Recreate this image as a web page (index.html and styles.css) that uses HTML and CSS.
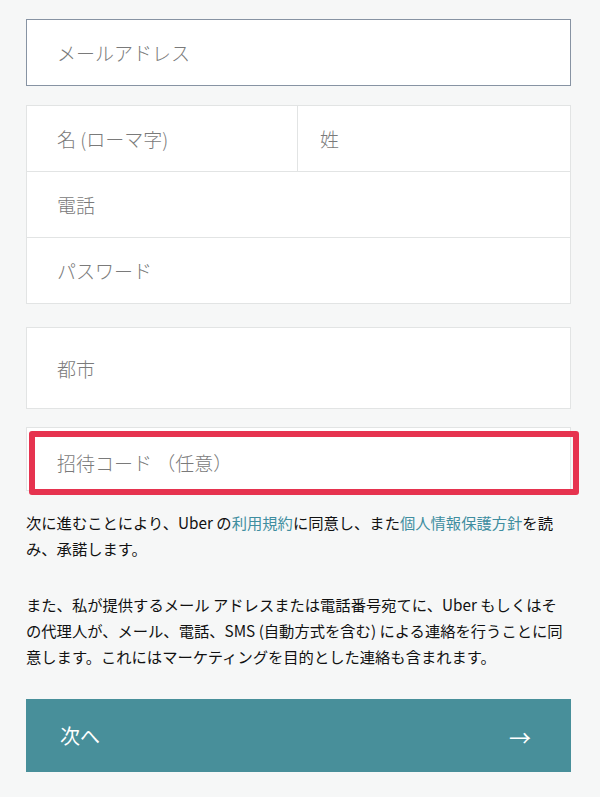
FILE: index.html
```html
<!DOCTYPE html>
<html lang="ja">
<head>
  <meta charset="UTF-8" />
  <meta name="viewport" content="width=device-width, initial-scale=1.0" />
  <title>Uber 登録</title>
  <link rel="stylesheet" href="styles.css">
</head>
<body>
  <form class="signup">
    <div class="field field-focus">
      <input type="email" placeholder="メールアドレス" />
    </div>

    <div class="group">
      <div class="group-row">
        <input type="text" placeholder="名 (ローマ字)" />
        <input type="text" class="divided" placeholder="姓" />
      </div>
      <div class="group-row">
        <input type="tel" placeholder="電話" />
      </div>
      <div class="group-row">
        <input type="password" placeholder="パスワード" />
      </div>
    </div>

    <div class="field field-city">
      <input type="text" placeholder="都市" />
    </div>

    <div class="field field-invite">
      <input type="text" placeholder="招待コード （任意）" />
      <span class="highlight"></span>
    </div>

    <p class="note">次に進むことにより、Uber の<a href="#">利用規約</a>に同意し、また<a href="#">個人情報保護方針</a>を読み、承諾します。</p>

    <p class="note">また、私が提供するメール アドレスまたは電話番号宛てに、Uber もしくはその代理人が、メール、電話、SMS (自動方式を含む) による連絡を行うことに同意します。これにはマーケティングを目的とした連絡も含まれます。</p>

    <button type="button" class="next">
      <span>次へ</span>
      <span class="arrow">→</span>
    </button>
  </form>
</body>
</html>
```

FILE: styles.css
```css
body {
  margin: 0;
  background: #f6f7f7;
  font-family: "Noto Sans CJK JP", "Noto Sans", sans-serif;
  color: #222;
}

.signup {
  width: 545px;
  padding: 19px 29px 0 26px;
}

input {
  display: block;
  width: 100%;
  box-sizing: border-box;
  border: none;
  outline: none;
  background: transparent;
  padding: 0 0 0 30px;
  font-family: inherit;
  font-size: 19px;
  font-weight: 300;
  color: #333;
}

input::placeholder {
  color: #7a7a7a;
}

.field {
  position: relative;
  background: #fff;
  border: 1px solid #e2e4e4;
}

.field input {
  height: 100%;
}

.field-focus {
  height: 65px;
  border: 1.5px solid #8793a3;
  margin-bottom: 19px;
}

.group {
  background: #fff;
  border: 1px solid #e2e4e4;
  margin-bottom: 23px;
}

.group-row {
  display: flex;
  height: 65px;
}

.group-row + .group-row {
  border-top: 1px solid #e2e4e4;
}

.group-row input {
  flex: 1;
  height: 100%;
}

.group-row input:first-child {
  flex: 0 0 270px;
}

.group-row .divided {
  border-left: 1px solid #e2e4e4;
  padding-left: 22px;
}

.field-city {
  height: 80px;
  margin-bottom: 18px;
}

.field-invite {
  height: 62px;
  margin-bottom: 18px;
}

.field-invite input {
  padding-top: 6px;
}

.highlight {
  position: absolute;
  left: 2px;
  right: -9px;
  top: 3px;
  bottom: -5px;
  border: 6px solid #e6334f;
  border-radius: 3px;
  pointer-events: none;
}

.note {
  margin: 0 0 30px;
  font-size: 15.3px;
  line-height: 26px;
  color: #111;
}

.note a {
  color: #3f8ea0;
  text-decoration: none;
}

.next {
  display: flex;
  justify-content: space-between;
  align-items: center;
  width: 100%;
  height: 73px;
  margin-top: 13px;
  padding: 0 40px 0 34px;
  border: none;
  background: #488f9a;
  color: #fff;
  font-family: inherit;
  font-size: 20px;
  cursor: pointer;
}

.arrow {
  font-size: 22px;
}
```
